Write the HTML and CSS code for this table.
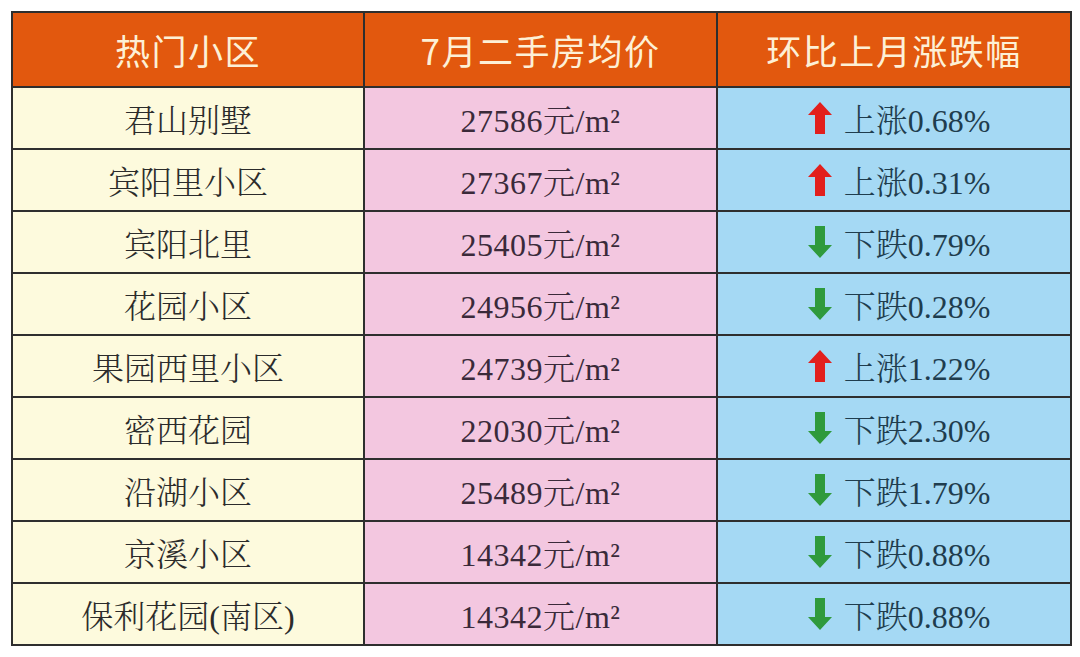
FILE: index.html
```html
<!DOCTYPE html>
<html lang="zh-CN">
<head>
<meta charset="utf-8">
<title>热门小区房价</title>
<link rel="stylesheet" href="styles.css">
</head>
<body>
<div class="wrap">
<table class="prices">
  <colgroup><col class="c1"><col class="c2"><col class="c3"></colgroup>
  <thead>
    <tr><th>热门小区</th><th>7月二手房均价</th><th>环比上月涨跌幅</th></tr>
  </thead>
  <tbody>
    <tr><td class="name">君山别墅</td><td class="price">27586元/m²</td><td class="chg"><svg class="arrow up" viewBox="0 0 24 32"><path d="M12 0 L24 13 L17 13 L17 32 L7 32 L7 13 L0 13 Z"/></svg><span>上涨0.68%</span></td></tr>
    <tr><td class="name">宾阳里小区</td><td class="price">27367元/m²</td><td class="chg"><svg class="arrow up" viewBox="0 0 24 32"><path d="M12 0 L24 13 L17 13 L17 32 L7 32 L7 13 L0 13 Z"/></svg><span>上涨0.31%</span></td></tr>
    <tr><td class="name">宾阳北里</td><td class="price">25405元/m²</td><td class="chg"><svg class="arrow down" viewBox="0 0 24 32"><path d="M12 32 L24 19 L17 19 L17 0 L7 0 L7 19 L0 19 Z"/></svg><span>下跌0.79%</span></td></tr>
    <tr><td class="name">花园小区</td><td class="price">24956元/m²</td><td class="chg"><svg class="arrow down" viewBox="0 0 24 32"><path d="M12 32 L24 19 L17 19 L17 0 L7 0 L7 19 L0 19 Z"/></svg><span>下跌0.28%</span></td></tr>
    <tr><td class="name">果园西里小区</td><td class="price">24739元/m²</td><td class="chg"><svg class="arrow up" viewBox="0 0 24 32"><path d="M12 0 L24 13 L17 13 L17 32 L7 32 L7 13 L0 13 Z"/></svg><span>上涨1.22%</span></td></tr>
    <tr><td class="name">密西花园</td><td class="price">22030元/m²</td><td class="chg"><svg class="arrow down" viewBox="0 0 24 32"><path d="M12 32 L24 19 L17 19 L17 0 L7 0 L7 19 L0 19 Z"/></svg><span>下跌2.30%</span></td></tr>
    <tr><td class="name">沿湖小区</td><td class="price">25489元/m²</td><td class="chg"><svg class="arrow down" viewBox="0 0 24 32"><path d="M12 32 L24 19 L17 19 L17 0 L7 0 L7 19 L0 19 Z"/></svg><span>下跌1.79%</span></td></tr>
    <tr><td class="name">京溪小区</td><td class="price">14342元/m²</td><td class="chg"><svg class="arrow down" viewBox="0 0 24 32"><path d="M12 32 L24 19 L17 19 L17 0 L7 0 L7 19 L0 19 Z"/></svg><span>下跌0.88%</span></td></tr>
    <tr><td class="name">保利花园(南区)</td><td class="price">14342元/m²</td><td class="chg"><svg class="arrow down" viewBox="0 0 24 32"><path d="M12 32 L24 19 L17 19 L17 0 L7 0 L7 19 L0 19 Z"/></svg><span>下跌0.88%</span></td></tr>
  </tbody>
</table>
</div>
</body>
</html>
```

FILE: styles.css
```css
html, body {
  margin: 0;
  padding: 0;
  background: #ffffff;
}

.wrap {
  padding: 11px 0 0 11px;
}

.prices {
  border-collapse: collapse;
  table-layout: fixed;
  width: 1059px;
  border: 2px solid #2e2e2e;
}

.prices col.c1 { width: 352px; }
.prices col.c2 { width: 353px; }
.prices col.c3 { width: 354px; }

.prices th,
.prices td {
  border: 2px solid #2e2e2e;
  padding: 0;
  text-align: center;
  vertical-align: middle;
}

.prices th {
  height: 73px;
  background: #e2580e;
  color: #fdf0d6;
  font-family: "Noto Sans CJK SC", sans-serif;
  font-weight: 400;
  font-size: 35px;
  letter-spacing: 1.5px;
}

.prices td {
  height: 60px;
  font-family: "Liberation Serif", "Noto Serif CJK SC", "Noto Sans CJK SC", serif;
  font-weight: 300;
  font-size: 32px;
  color: #2b2b2b;
}

.prices td.name {
  background: #fdfadd;
}

.prices td.price {
  background: #f3c7e0;
  color: #3a2a3a;
  letter-spacing: 0.5px;
}

.prices td.chg {
  background: #a5d9f4;
  color: #1f3d4e;
  padding-left: 10px;
}

.chg span {
  vertical-align: middle;
}

.arrow {
  width: 24px;
  height: 32px;
  vertical-align: middle;
  margin-right: 12px;
}

.arrow.up {
  fill: #e21f1c;
}

.arrow.down {
  fill: #2f9a3c;
}
```
